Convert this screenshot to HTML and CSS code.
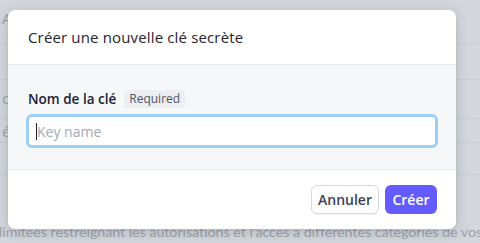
FILE: index.html
```html
<!DOCTYPE html>
<html lang="fr">
<head>
<meta charset="utf-8">
<link rel="stylesheet" href="styles.css">
</head>
<body>
<div class="page">
  <div class="row r1"><span class="bgtext">A</span></div>
  <div class="row r2"></div>
  <div class="row r3"><span class="bgtext">q</span></div>
  <div class="row r4"><span class="bgtext">é</span></div>
  <div class="row r5"></div>
  <div class="row r6"><span class="bgtext">limitées restreignant les autorisations et l'accès à différentes catégories de vos</span></div>
</div>
<div class="modal">
  <div class="modal-header">
    <h2 class="modal-title">Créer une nouvelle clé secrète</h2>
  </div>
  <div class="modal-body">
    <div class="field-label">
      <span class="label-text">Nom de la clé</span>
      <span class="badge">Required</span>
    </div>
    <div class="input"><span class="caret"></span><span class="placeholder">Key name</span></div>
  </div>
  <div class="modal-footer">
    <button class="btn btn-secondary">Annuler</button>
    <button class="btn btn-primary">Créer</button>
  </div>
</div>
</body>
</html>
```
FILE: styles.css
```css
html, body {
  margin: 0;
  padding: 0;
}
body {
  width: 480px;
  height: 243px;
  overflow: hidden;
  background: #d3d6dc;
  font-family: "Open Sans", "Noto Sans", sans-serif;
  position: relative;
}
.page {
  display: flex;
  flex-direction: column;
  overflow: hidden;
}
.row {
  border-bottom: 1px solid #c7cbd2;
  display: flex;
  align-items: flex-end;
  color: #9ba0a9;
  font-size: 15px;
  line-height: 18px;
  white-space: nowrap;
  overflow: hidden;
  box-sizing: border-box;
}
.bgtext { padding-left: 2px; }
.r1 { height: 44px; padding-bottom: 16px; }
.r2 { height: 36px; }
.r3 { height: 39px; padding-bottom: 11px; }
.r4 { height: 24px; padding-bottom: 2px; }
.r5 { height: 32px; }
.r6 { height: 68px; border-bottom: none; padding-bottom: 2px; }
.r6 .bgtext {
  padding-left: 0;
  margin-left: -1px;
  font-family: Lato, "Open Sans", sans-serif;
  font-size: 14.3px;
  letter-spacing: -0.05px;
}

.modal {
  position: absolute;
  left: 8px;
  top: 10px;
  width: 448px;
  height: 219px;
  background: #fff;
  border-radius: 7px;
  box-shadow: 0 3px 14px rgba(40, 45, 60, 0.18), 0 1px 3px rgba(40,45,60,0.08);
  display: flex;
  flex-direction: column;
  overflow: hidden;
}
.modal-header {
  height: 55px;
  border-bottom: 1px solid #e6e8eb;
  display: flex;
  align-items: center;
  padding: 0 20px;
  box-sizing: border-box;
}
.modal-title {
  margin: 0;
  font-size: 15px;
  font-weight: 400;
  color: #1f2430;
  letter-spacing: 0.15px;
}
.modal-body {
  background: #f6f7f9;
  height: 105px;
  border-bottom: 1px solid #e6e8eb;
  box-sizing: border-box;
  padding: 25px 18px 0 18px;
}
.field-label {
  display: flex;
  align-items: center;
  gap: 8px;
  padding-left: 2px;
  height: 18px;
}
.label-text {
  font-size: 13.5px;
  font-weight: 600;
  color: #1a1f36;
}
.badge {
  background: #eceef1;
  color: #4f5664;
  font-size: 12px;
  font-weight: 500;
  padding: 1px 5px;
  border-radius: 4px;
  line-height: 16px;
}
.input {
  margin-top: 6px;
  height: 34px;
  box-sizing: border-box;
  border: 3px solid #9ccff3;
  border-radius: 6px;
  background: #fff;
  display: flex;
  align-items: center;
  padding-left: 7px;
}
.caret {
  width: 1px;
  height: 17px;
  background: #1f2430;
}
.placeholder {
  font-size: 14px;
  color: #a3a9b5;
}
.modal-footer {
  flex: 1;
  display: flex;
  justify-content: flex-end;
  align-items: center;
  gap: 6px;
  padding: 0 19px 0 0;
}
.btn {
  font-family: inherit;
  height: 29px;
  border-radius: 6px;
  font-size: 14px;
  font-weight: 600;
  padding: 0 6px;
  cursor: pointer;
}
.btn-secondary {
  width: 68px;
  background: #fff;
  border: 1px solid #d5d8dd;
  color: #3c4257;
  box-shadow: 0 1px 1px rgba(0,0,0,0.05);
}
.btn-primary {
  width: 52px;
  background: #635bff;
  border: none;
  color: #fff;
}
```
